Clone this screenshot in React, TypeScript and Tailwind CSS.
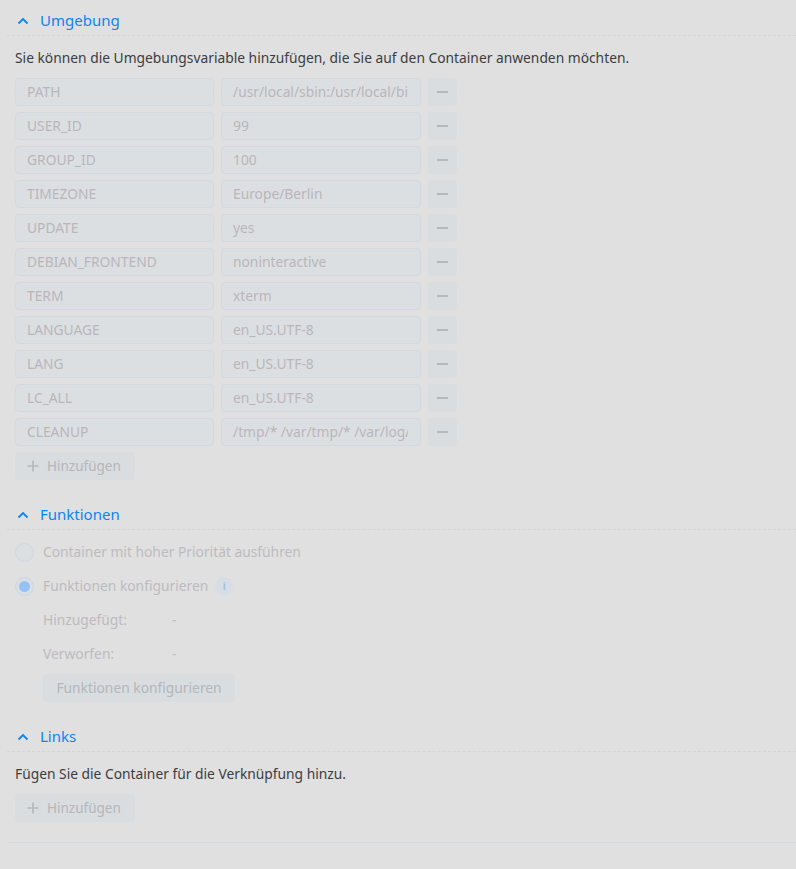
import React from "react";

const rows: [string, string][] = [
  ["PATH", "/usr/local/sbin:/usr/local/bin:/usr/sbin:/usr/bin:/sbin:/bin"],
  ["USER_ID", "99"],
  ["GROUP_ID", "100"],
  ["TIMEZONE", "Europe/Berlin"],
  ["UPDATE", "yes"],
  ["DEBIAN_FRONTEND", "noninteractive"],
  ["TERM", "xterm"],
  ["LANGUAGE", "en_US.UTF-8"],
  ["LANG", "en_US.UTF-8"],
  ["LC_ALL", "en_US.UTF-8"],
  ["CLEANUP", "/tmp/* /var/tmp/* /var/log/*"],
];

function Chevron() {
  return (
    <svg width="12" height="8" viewBox="0 0 12 8" className="shrink-0">
      <path d="M1.5 6.5 L6 2 L10.5 6.5" fill="none" stroke="#0b85f0" strokeWidth="1.8" />
    </svg>
  );
}

function Header({ title }: { title: string }) {
  return (
    <div className="h-[36px] pt-[6px] flex items-center border-b border-dashed border-[#d3d6da]">
      <div className="pl-[10px] flex items-center">
        <Chevron />
        <span className="ml-[11px] text-[15px] text-[#0b85f0] leading-none">{title}</span>
      </div>
    </div>
  );
}

function AddButton() {
  return (
    <div className="h-[28px] w-[120px] rounded-[4px] bg-[#d9dde0] flex items-center pl-[12px] text-[13.5px] text-[#b4b6b9]">
      <svg width="12" height="12" viewBox="0 0 12 12" className="mr-[8px]">
        <path d="M6 0.5 V11.5 M0.5 6 H11.5" stroke="#b4b7ba" strokeWidth="1.6" />
      </svg>
      Hinzufügen
    </div>
  );
}

export default function App() {
  return (
    <div
      className="w-[796px] h-[869px] bg-[#e0e0e0] pl-[7px] overflow-hidden"
      style={{ fontFamily: '"Noto Sans", "DejaVu Sans", sans-serif' }}
    >
      <Header title="Umgebung" />
      <div className="pl-[8px]">
        <div className="mt-[14px] mb-[12px] h-[16px] leading-[16px] text-[13.8px] text-[#3a3d42] whitespace-nowrap">
          Sie können die Umgebungsvariable hinzufügen, die Sie auf den Container anwenden möchten.
        </div>
        <div className="flex flex-col gap-[6px]">
          {rows.map(([k, v]) => (
            <div key={k} className="flex gap-[7px] h-[28px]">
              <div className="w-[199px] h-[28px] rounded-[4px] border border-[#d3d9e1] bg-[#dcdfe2] flex items-center px-[11px] pt-[1px] text-[13.8px] text-[#b9b6ba] overflow-hidden whitespace-nowrap">
                {k}
              </div>
              <div className="w-[200px] h-[28px] rounded-[4px] border border-[#d3d9e1] bg-[#dcdfe2] flex items-center pl-[11px] pr-[12px] pt-[1px] text-[13.8px] text-[#b9b6ba] overflow-hidden whitespace-nowrap">
                <span className="block overflow-hidden">{v}</span>
              </div>
              <div className="w-[29px] h-[28px] rounded-[4px] bg-[#d9dde0] flex items-center justify-center">
                <div className="w-[11px] h-[2px] bg-[#b5b8bc]" />
              </div>
            </div>
          ))}
          <AddButton />
        </div>
      </div>

      <div className="mt-[14px]">
        <Header title="Funktionen" />
      </div>
      <div className="pl-[8px] mt-[8px] flex flex-col gap-[6px] text-[13.8px]">
        <div className="h-[28px] flex items-center">
          <div className="w-[19px] h-[19px] rounded-full border border-[#d0d8e2] bg-[#dcdfe2]" />
          <span className="ml-[9px] pt-[1px] text-[#bdbbbf]">Container mit hoher Priorität ausführen</span>
        </div>
        <div className="h-[28px] flex items-center">
          <div className="w-[19px] h-[19px] rounded-full border border-[#c9d6e6] bg-[#dcdfe2] flex items-center justify-center">
            <div className="w-[11px] h-[11px] rounded-full bg-[#95c2f5]" />
          </div>
          <span className="ml-[9px] pt-[1px] text-[#bdbbbf]">Funktionen konfigurieren</span>
          <div className="ml-[7px] w-[18px] h-[18px] rounded-full bg-[#d7dde5] flex items-center justify-center text-[10px] font-bold text-[#9ec0ea] leading-none">
            i
          </div>
        </div>
        <div className="h-[28px] flex items-center pl-[28px] pt-[1px] text-[#bdbbbf]">
          <span className="w-[129px]">Hinzugefügt:</span>
          <span>-</span>
        </div>
        <div className="h-[28px] flex items-center pl-[28px] pt-[1px] text-[#bdbbbf]">
          <span className="w-[129px]">Verworfen:</span>
          <span>-</span>
        </div>
        <div className="pl-[28px]">
          <div className="h-[28px] w-[192px] rounded-[4px] bg-[#d9dde0] flex items-center justify-center pt-[1px] text-[#b4b6b9]">
            Funktionen konfigurieren
          </div>
        </div>
      </div>

      <div className="mt-[14px]">
        <Header title="Links" />
      </div>
      <div className="pl-[8px] mt-[8px] flex flex-col gap-[6px]">
        <div className="h-[28px] flex items-center pt-[1px] text-[13.8px] text-[#3a3d42]">
          Fügen Sie die Container für die Verknüpfung hinzu.
        </div>
        <AddButton />
      </div>
      <div className="mt-[20px] border-b border-[#d2d9e1]" />
    </div>
  );
}
